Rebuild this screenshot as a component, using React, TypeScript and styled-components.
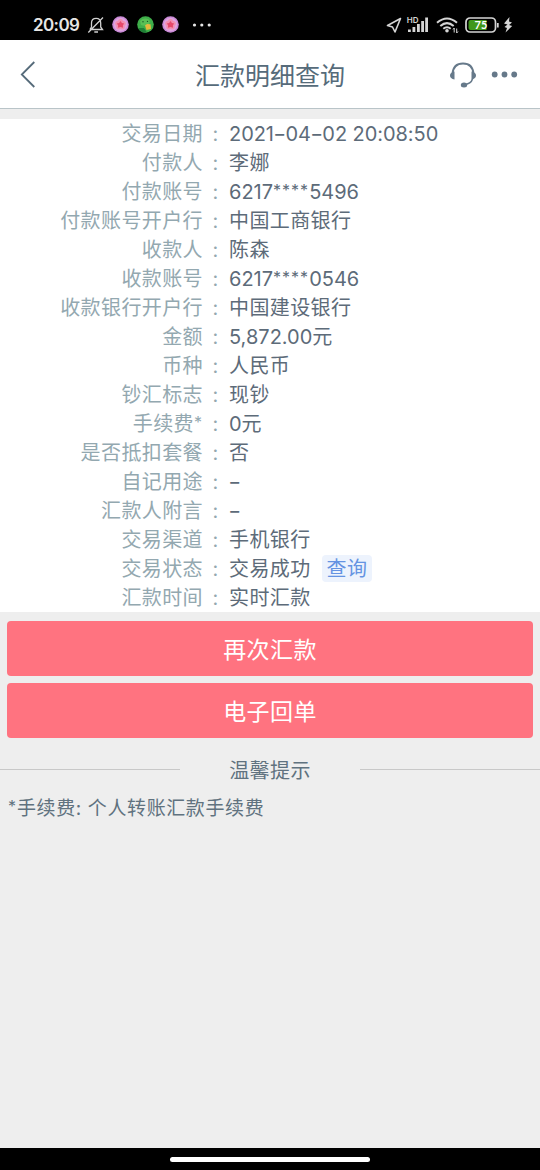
import React from "react";
import styled, { createGlobalStyle } from "styled-components";

const GlobalStyle = createGlobalStyle`
  * { box-sizing: border-box; }
  body {
    margin: 0;
    background: #eeeeee;
    font-family: Inter, "Noto Sans CJK SC", sans-serif;
  }
`;

const Screen = styled.div`
  width: 540px;
  height: 1170px;
  display: flex;
  flex-direction: column;
  background: #eeeeee;
  overflow: hidden;
`;

const StatusBar = styled.div`
  height: 40px;
  flex: none;
  display: flex;
  justify-content: space-between;
  padding: 10px 26px 0 33px;
  background: #000;
`;

const StatusGroup = styled.div`
  display: flex;
  align-items: center;
  height: 29px;
`;

const Clock = styled.span`
  width: 53px;
  padding-top: 1px;
  font: 600 17px/29px Inter, sans-serif;
  letter-spacing: -0.6px;
  color: #e6e6e6;
`;

const NavBar = styled.header`
  height: 69px;
  flex: none;
  display: grid;
  grid-template-columns: 120px 1fr 120px;
  align-items: center;
  padding: 0 22px 0 20px;
  background: #fff;
  border-bottom: 1px solid #b9c4c8;
`;

const Title = styled.h1`
  margin: 0;
  padding-left: 2px;
  text-align: center;
  white-space: nowrap;
  font: 400 25px/36px "Noto Sans CJK SC", sans-serif;
  color: #566b7a;
`;

const NavActions = styled.div`
  display: flex;
  justify-content: flex-end;
  align-items: center;
  gap: 14px;
`;

const Details = styled.dl`
  margin: 10px 0 0;
  flex: none;
  background: #fff;
`;

const Row = styled.div`
  display: flex;
  height: 29px;
  padding-top: 1px;
  font-size: 20px;
  line-height: 29px;
  letter-spacing: 0.4px;
  white-space: nowrap;
`;

const Label = styled.dt`
  width: 203px;
  text-align: right;
  font-weight: 400;
  color: #93a8b0;
`;

const Colon = styled.span`
  width: 26px;
  text-align: center;
  padding-right: 1px;
  color: #93a8b0;
`;

const Value = styled.dd<{ $spacing?: number }>`
  margin: 0;
  display: flex;
  align-items: center;
  height: 29px;
  letter-spacing: ${(p) => p.$spacing ?? 0.4}px;
  color: #5d6b79;
`;

const Asterisk = styled.span`
  font-size: 16px;
  line-height: 1;
  letter-spacing: 1px;
  vertical-align: 3px;
`;

const Hyphen = styled.span`
  display: inline-block;
  width: 11.5px;
  text-align: center;
  letter-spacing: 0;
  transform: scaleX(1.4);
`;

const QueryTag = styled.button`
  height: 27px;
  margin: -2px 0 0 11px;
  padding: 0 5px;
  border: 0;
  border-radius: 4px;
  background: #edf3fd;
  color: #6593e2;
  font: inherit;
  line-height: 28px;
  letter-spacing: 0.4px;
`;

const Actions = styled.div`
  flex: none;
  display: flex;
  flex-direction: column;
  gap: 7px;
  padding: 9px 7px 0;
`;

const ActionButton = styled.button`
  height: 55px;
  border: 0;
  border-radius: 4px;
  padding: 0 0 1px;
  background: #ff7380;
  color: #fff;
  font: 400 23px/34px "Noto Sans CJK SC", sans-serif;
  letter-spacing: 0.4px;
`;

const Divider = styled.div`
  flex: none;
  display: grid;
  grid-template-columns: 1fr 1fr 1fr;
  align-items: center;
  height: 30px;
  margin-top: 14px;
`;

const Rule = styled.span`
  height: 1px;
  background: #c8c8c8;
`;

const TipTitle = styled.span`
  padding-top: 4px;
  text-align: center;
  font-size: 20px;
  line-height: 30px;
  letter-spacing: 0.4px;
  color: #60727f;
`;

const Note = styled.p`
  margin: 12px 0 0 8px;
  flex: 1;
  font-size: 19px;
  line-height: 29px;
  letter-spacing: 0.6px;
  color: #60727f;
`;

const HomeBar = styled.div`
  height: 22px;
  flex: none;
  display: flex;
  justify-content: center;
  align-items: center;
  background: #000;
`;

const HomeIndicator = styled.span`
  width: 200px;
  height: 5px;
  border-radius: 3px;
  background: #fff;
`;

type Detail = { label: string; value: string; spacing?: number; query?: boolean };

const details: Detail[] = [
  { label: "交易日期", value: "2021-04-02 20:08:50", spacing: -0.06 },
  { label: "付款人", value: "李娜" },
  { label: "付款账号", value: "6217****5496", spacing: 0 },
  { label: "付款账号开户行", value: "中国工商银行" },
  { label: "收款人", value: "陈森" },
  { label: "收款账号", value: "6217****0546", spacing: 0 },
  { label: "收款银行开户行", value: "中国建设银行" },
  { label: "金额", value: "5,872.00元", spacing: 0 },
  { label: "币种", value: "人民币" },
  { label: "钞汇标志", value: "现钞" },
  { label: "手续费*", value: "0元", spacing: 0 },
  { label: "是否抵扣套餐", value: "否" },
  { label: "自记用途", value: "-" },
  { label: "汇款人附言", value: "-" },
  { label: "交易渠道", value: "手机银行" },
  { label: "交易状态", value: "交易成功", query: true },
  { label: "汇款时间", value: "实时汇款" },
];

/* Sets small raised asterisks and wide hyphens inside a line of text. */
const Marked = ({ text }: { text: string }) => (
  <span>
    {text.split(/(\*+|-)/).map((part, i) => {
      if (part.startsWith("*")) return <Asterisk key={i}>{part}</Asterisk>;
      if (part === "-") return <Hyphen key={i}>{part}</Hyphen>;
      return part;
    })}
  </span>
);

const FlowerIcon = () => (
  <svg width="17" height="17" viewBox="0 0 17 17">
    <circle cx="8.5" cy="8.5" r="8.3" fill="#c98ad6" />
    <circle cx="8.5" cy="8.5" r="6.8" fill="#dfa5e0" />
    <g fill="#f28fb0">
      <circle cx="8.5" cy="5.6" r="2.5" />
      <circle cx="11.3" cy="7.6" r="2.5" />
      <circle cx="10.3" cy="11" r="2.5" />
      <circle cx="6.7" cy="11" r="2.5" />
      <circle cx="5.7" cy="7.6" r="2.5" />
    </g>
    <path d="M8.500 5L9.900 6.900L12.200 7.400L10.900 9.300L11 11.800L8.500 11L6 11.800L6.100 9.300L4.800 7.400L7.100 6.900Z" fill="#e5486a" />
  </svg>
);

const BirdIcon = () => (
  <svg width="17" height="17" viewBox="0 0 17 17">
    <circle cx="8.5" cy="8.5" r="8.3" fill="#3fae4a" />
    <path d="M1 12A8.3 8.3 0 0 0 10 16.6L7 12Z" fill="#1f7f35" />
    <path d="M3 5Q6 1.500 11 3Q14 5 12 8Q8 11 4 9Z" fill="#58c055" />
    <circle cx="6" cy="5.800" r=".7" fill="#17552a" />
    <circle cx="10.500" cy="5.400" r=".7" fill="#17552a" />
    <path d="M8 9.500L10 8L13.500 8.300L14 13L9.500 14Z" fill="#e5b93c" />
  </svg>
);

const Gap = styled.span<{ $w: number }>`
  width: ${(p) => p.$w}px;
  flex: none;
`;

const StatusIcons = () => (
  <StatusBar>
    <StatusGroup>
      <Clock>20:09</Clock>
      <Gap $w={1} />
      <svg width="18" height="18" viewBox="0 0 18 18" fill="none" stroke="#d0d0d0" strokeWidth="1.3">
        <path d="M2.800 13.500H15.500L13.700 11V7C13.700 4 12 2.300 9.200 2.300S4.500 4 4.500 7V11L2.800 13.500M7.300 16H11M1.300 16.500L16 1.500" />
      </svg>
      <Gap $w={6.5} />
      <FlowerIcon />
      <Gap $w={8} />
      <BirdIcon />
      <Gap $w={8} />
      <FlowerIcon />
      <Gap $w={13.5} />
      <svg width="20" height="4" viewBox="0 0 20 4" fill="#e6e6e6">
        <circle cx="2.500" cy="2" r="1.600" />
        <circle cx="9.800" cy="2" r="1.600" />
        <circle cx="17.200" cy="2" r="1.600" />
      </svg>
    </StatusGroup>
    <StatusGroup>
      <svg width="128" height="20" viewBox="0 0 128 20" fill="none" stroke="#d5d5d5">
        <path d="M14.500 3.500L1.500 10.500L6.500 12L9 17Z" strokeWidth="1.600" strokeLinejoin="round" />
        <text x="20.800" y="7.500" fill="#d5d5d5" stroke="none" fontSize="8" fontWeight="600" fontFamily="Inter, sans-serif">HD</text>
        <g fill="#d5d5d5" stroke="none">
          <rect x="22" y="14.500" width="2.800" height="2.500" />
          <rect x="26.500" y="12" width="2.800" height="5" />
          <rect x="31" y="9" width="2.800" height="8" />
          <rect x="35.200" y="6" width="2.800" height="11" />
          <rect x="39.200" y="2.500" width="2.800" height="14.500" />
        </g>
        <g strokeWidth="2">
          <path d="M51 7.800Q61 -.8 71 7.800" />
          <path d="M54.300 11Q61 5.200 67.700 11" />
          <path d="M57.300 13.800Q61 10.800 64.700 13.800" />
        </g>
        <circle cx="61" cy="15.700" r="1.800" fill="#d5d5d5" stroke="none" />
        <path d="M68.200 13V17.500M70.700 13.500V18M67 14.500L68.200 13M70.700 18L72 16.500" strokeWidth="1" />
        <rect x="80" y="3" width="29.500" height="14" rx="4" strokeWidth="1.700" />
        <path d="M84.500 5H100.500V15H84.500Q82.500 15 82.500 13V7Q82.500 5 84.500 5Z" fill="#40981b" stroke="none" />
        <path d="M111.800 8V12.500" strokeWidth="1.800" />
        <text x="94.900" y="14" textAnchor="middle" fill="#fff" stroke="none" fontSize="11" fontWeight="700" fontFamily="Lato, sans-serif">75</text>
        <path d="M123.500 2L118 8.500L121.500 9.500L118.500 12L121 13L119.500 17.500L126.200 11L123 10L126 7.500L123 6.500Z" fill="#d5d5d5" stroke="none" />
      </svg>
    </StatusGroup>
  </StatusBar>
);

export default function App() {
  return (
    <>
      <GlobalStyle />
      <Screen>
        <StatusIcons />
        <NavBar>
          <svg width="16" height="28" viewBox="0 0 16 28" fill="none" stroke="#566b7a" strokeWidth="1.800">
            <path d="M14.300 2L1.800 14.500L14.300 27" />
          </svg>
          <Title>汇款明细查询</Title>
          <NavActions>
            <svg width="28" height="28" viewBox="0 0 28 28" fill="none" stroke="#66798a">
              <path d="M3.500 14C4 6.800 8 3.500 14 3.500S24 6.800 24.500 14" strokeWidth="2" />
              <path d="M23.500 19C22.500 22.500 19.500 24.200 15 24.500" strokeWidth="1.500" />
              <path d="M5.500 11.500V19.500C2.500 19 1 17.500 1 15.500S2.500 12 5.500 11.500ZM22.500 11.500V19.500C25.500 19 27 17.500 27 15.500S25.500 12 22.500 11.500Z" fill="#66798a" stroke="none" />
              <ellipse cx="15" cy="25" rx="3.200" ry="2.500" fill="#66798a" stroke="none" />
            </svg>
            <svg width="27" height="8" viewBox="0 0 27 8" fill="#66798a">
              <circle cx="3.700" cy="4.500" r="2.900" />
              <circle cx="13.500" cy="4.500" r="2.900" />
              <circle cx="23.200" cy="4.500" r="2.900" />
            </svg>
          </NavActions>
        </NavBar>
        <Details>
          {details.map((d) => (
            <Row key={d.label}>
              <Label>
                <Marked text={d.label} />
              </Label>
              <Colon>:</Colon>
              <Value $spacing={d.spacing}>
                <Marked text={d.value} />
                {d.query && <QueryTag>查询</QueryTag>}
              </Value>
            </Row>
          ))}
        </Details>
        <Actions>
          <ActionButton>再次汇款</ActionButton>
          <ActionButton>电子回单</ActionButton>
        </Actions>
        <Divider>
          <Rule />
          <TipTitle>温馨提示</TipTitle>
          <Rule />
        </Divider>
        <Note>
          <Marked text="*手续费: 个人转账汇款手续费" />
        </Note>
        <HomeBar>
          <HomeIndicator />
        </HomeBar>
      </Screen>
    </>
  );
}
